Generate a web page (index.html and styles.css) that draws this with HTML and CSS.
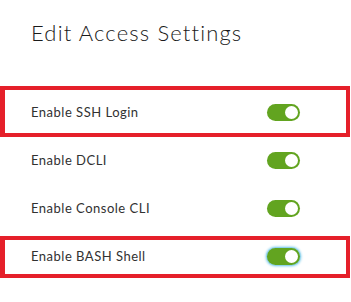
FILE: index.html
```html
<!DOCTYPE html>
<html>
<head>
<meta charset="utf-8">
<link rel="stylesheet" href="styles.css">
</head>
<body>
<div class="dialog">
  <h1 class="title">Edit Access Settings</h1>
  <div class="rows">
    <div class="row"><span class="label">Enable SSH Login</span><span class="toggle"><span class="knob"></span></span></div>
    <div class="row"><span class="label">Enable DCLI</span><span class="toggle"><span class="knob"></span></span></div>
    <div class="row"><span class="label">Enable Console CLI</span><span class="toggle"><span class="knob"></span></span></div>
    <div class="row"><span class="label">Enable BASH Shell</span><span class="toggle focused"><span class="knob"></span></span></div>
  </div>
  <div class="mark mark-ssh"></div>
  <div class="mark mark-bash"></div>
</div>
</body>
</html>
```
FILE: styles.css
```css
html, body {
  margin: 0;
  padding: 0;
  background: #fff;
}
.dialog {
  position: relative;
  width: 351px;
  height: 302px;
  overflow: hidden;
  font-family: Lato, "Noto Sans", sans-serif;
  color: #333;
}
.title {
  margin: 0;
  padding: 18px 0 0 31px;
  height: 70px;
  box-sizing: border-box;
  font-size: 22px;
  line-height: 30px;
  font-weight: 300;
  color: #1a1a1a;
  letter-spacing: 1.15px;
}
.rows {
  display: flex;
  flex-direction: column;
  width: 300px;
}
.row {
  height: 48px;
  display: flex;
  align-items: center;
  justify-content: space-between;
  padding-left: 31px;
}
.row:first-child {
  margin-top: 18px;
}
.label {
  font-size: 13px;
  color: #313131;
  letter-spacing: 0.5px;
}
.toggle {
  width: 33px;
  height: 17px;
  border-radius: 9px;
  background: #62a420;
  display: flex;
  align-items: center;
  justify-content: flex-end;
  padding-right: 2px;
  box-sizing: border-box;
}
.toggle.focused {
  box-shadow: 0 0 0 1px #8fd3ee, 0 0 2px 2px #b7e3f4;
}
.knob {
  width: 13px;
  height: 13px;
  border-radius: 50%;
  background: #fff;
}
.mark {
  position: absolute;
  border: 4px solid #e5202a;
  border-left-width: 5px;
  box-sizing: border-box;
  left: 0;
  width: 350px;
}
.mark-ssh {
  top: 86px;
  height: 51px;
}
.mark-bash {
  top: 236px;
  height: 42px;
}
```
